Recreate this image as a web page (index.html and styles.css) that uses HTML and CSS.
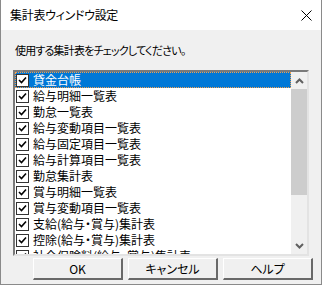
FILE: index.html
```html
<!DOCTYPE html>
<html lang="ja">
<head>
<meta charset="UTF-8">
<title>集計表ウィンドウ設定</title>
<link rel="stylesheet" href="styles.css">
</head>
<body>
<div class="dialog">
  <div class="titlebar">
    <span class="title">集計表ウィンドウ設定</span>
    <svg class="close" width="11" height="11" viewBox="0 0 11 11">
      <path d="M0.5 0.5 L10.5 10.5 M10.5 0.5 L0.5 10.5" stroke="#000" stroke-width="1" fill="none"/>
    </svg>
  </div>
  <div class="content">
    <p class="hint">使用する集計表をチェックしてください。</p>
    <div class="listbox">
      <ul class="items">
        <li class="item selected"><span class="check"></span>貸金台帳</li>
        <li class="item"><span class="check"></span>給与明細一覧表</li>
        <li class="item"><span class="check"></span>勤怠一覧表</li>
        <li class="item"><span class="check"></span>給与変動項目一覧表</li>
        <li class="item"><span class="check"></span>給与固定項目一覧表</li>
        <li class="item"><span class="check"></span>給与計算項目一覧表</li>
        <li class="item"><span class="check"></span>勤怠集計表</li>
        <li class="item"><span class="check"></span>賞与明細一覧表</li>
        <li class="item"><span class="check"></span>賞与変動項目一覧表</li>
        <li class="item"><span class="check"></span>支給(給与・賞与)集計表</li>
        <li class="item"><span class="check"></span>控除(給与・賞与)集計表</li>
        <li class="item"><span class="check"></span>社会保険料(給与・賞与)集計表</li>
      </ul>
      <div class="scrollbar">
        <div class="arrow">
          <svg width="9" height="6" viewBox="0 0 9 6"><path d="M1 5 L4.5 1.5 L8 5" stroke="#606060" stroke-width="2" fill="none"/></svg>
        </div>
        <div class="thumb"></div>
        <div class="track"></div>
        <div class="arrow">
          <svg width="9" height="6" viewBox="0 0 9 6"><path d="M1 1 L4.5 4.5 L8 1" stroke="#606060" stroke-width="2" fill="none"/></svg>
        </div>
      </div>
    </div>
    <div class="buttons">
      <button class="btn">OK</button>
      <button class="btn">キャンセル</button>
      <button class="btn">ヘルプ</button>
    </div>
  </div>
</div>
</body>
</html>
```

FILE: styles.css
```css
body {
    margin: 0;
    font-family: "Noto Sans CJK JP", "Noto Sans", sans-serif;
    font-size: 12px;
    font-feature-settings: "palt";
    color: #000;
}

.dialog {
    width: 322px;
    height: 285px;
    box-sizing: border-box;
    border: 1px solid #8a8a8a;
    border-top: none;
    background: #f0f0f0;
    display: flex;
    flex-direction: column;
}

.titlebar {
    height: 30px;
    background: #fff;
    display: flex;
    align-items: center;
    justify-content: space-between;
    padding: 0 9px 0 9px;
}

.title {
    line-height: 16px;
    letter-spacing: -0.3px;
}

.close {
    margin-top: 1px;
}

.content {
    flex: 1;
    padding: 12px 0 0 12px;
}

.hint {
    margin: 0 0 0 2px;
    font-size: 11px;
    letter-spacing: -0.8px;
    line-height: 16px;
    height: 28px;
}

.listbox {
    width: 296px;
    height: 186px;
    box-sizing: border-box;
    border-style: solid;
    border-width: 2px;
    border-color: #7a7a7a #e3e3e3 #e3e3e3 #7a7a7a;
    background: #fff;
    display: flex;
    overflow: hidden;
}

.items {
    list-style: none;
    margin: 0;
    padding: 0;
    flex: 1;
    overflow: hidden;
}

.item {
    height: 16px;
    display: flex;
    align-items: center;
    padding-left: 1px;
    line-height: 16px;
    white-space: nowrap;
}

.item.selected {
    background: #0078d7;
    color: #fff;
    outline: 1px dotted #f0a050;
    outline-offset: -1px;
}

.check {
    width: 11px;
    height: 11px;
    border: 1px solid #333;
    background: #fff url("data:image/svg+xml,%3Csvg xmlns='http://www.w3.org/2000/svg' width='11' height='11'%3E%3Cpath d='M2 5 L4.5 7.5 L9 2.5' stroke='%23000' stroke-width='1.6' fill='none'/%3E%3C/svg%3E") no-repeat;
    margin-right: 4px;
    flex: none;
}

.scrollbar {
    width: 16px;
    background: #f0f0f0;
    display: flex;
    flex-direction: column;
}

.arrow {
    height: 17px;
    display: flex;
    align-items: center;
    justify-content: center;
}

.thumb {
    height: 106px;
    background: #cdcdcd;
}

.track {
    flex: 1;
}

.buttons {
    display: flex;
    gap: 5px;
    padding: 2px 0 0 20px;
}

.btn {
    width: 90px;
    height: 22px;
    padding: 0;
    background: #f0f0f0;
    font-family: inherit;
    font-size: 12px;
    font-feature-settings: "palt";
    color: #000;
    border-style: solid;
    border-width: 1px 2px 2px 1px;
    border-color: #fff #696969 #696969 #fff;
}
```
